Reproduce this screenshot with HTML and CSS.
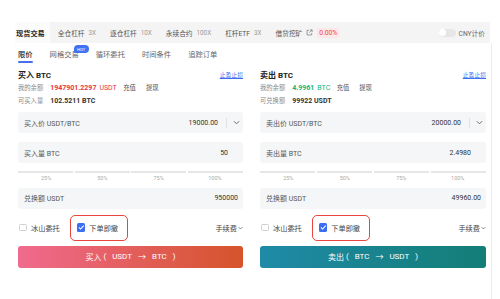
FILE: index.html
```html
<!DOCTYPE html>
<html lang="zh-CN">
<head>
<meta charset="utf-8">
<title>现货交易</title>
<link rel="stylesheet" href="styles.css">
</head>
<body>
<div class="app">
  <div class="topbar">
    <div class="tab active">现货交易</div>
    <div class="tab">全仓杠杆<span class="mult">3X</span></div>
    <div class="tab">逐仓杠杆<span class="mult">10X</span></div>
    <div class="tab">永续合约<span class="mult">100X</span></div>
    <div class="tab">杠杆ETF<span class="mult">3X</span></div>
    <div class="tab">借贷挖矿<svg class="ext" viewBox="0 0 8 8"><path d="M3.5 1.5H1.2v5.3h5.3V4.5" fill="none" stroke="#777" stroke-width="0.8"/><path d="M4.5 1h2.5v2.5M7 1L3.8 4.2" fill="none" stroke="#777" stroke-width="0.8"/></svg><span class="rate">0.00%</span></div>
    <div class="cny"><span class="toggle"><i></i></span>CNY计价</div>
  </div>
  <div class="main">
    <div class="subtabs">
      <div class="subtab active">限价</div>
      <div class="subtab grid">网格交易<span class="hot">HOT</span></div>
      <div class="subtab">循环委托</div>
      <div class="subtab">时间条件</div>
      <div class="subtab">追踪订单</div>
    </div>
    <div class="cols">
      <div class="col">
        <div class="title-row"><span class="title">买入 BTC</span><span class="link">止盈止损</span></div>
        <div class="info">我的余额<span class="num red">1947901.2297</span><span class="unit red">USDT</span><span class="act">充值</span><span class="act act2">提现</span></div>
        <div class="info">可买入量<span class="num dark">102.5211 BTC</span></div>
        <div class="field f1">买入价 USDT/BTC<span class="val">19000.00</span><span class="div"></span><svg class="chev" viewBox="0 0 8 5"><path d="M1 1l3 3 3-3" fill="none" stroke="#666" stroke-width="1.1"/></svg></div>
        <div class="field f2">买入量 BTC<span class="val">50</span></div>
        <div class="slider"><i></i><i></i><i></i><i></i></div>
        <div class="pcts"><span>25%</span><span>50%</span><span>75%</span><span>100%</span></div>
        <div class="field f3">兑换额 USDT<span class="val">950000</span></div>
        <div class="opts">
          <div class="opt"><span class="box"></span>冰山委托</div>
          <div class="opt hl"><span class="box on"><svg viewBox="0 0 8 8"><path d="M1.8 4.1l1.6 1.6 2.9-3.2" fill="none" stroke="#fff" stroke-width="1"/></svg></span>下单即撤</div>
          <div class="fee">手续费<svg class="chev small" viewBox="0 0 8 5"><path d="M1 1l3 3 3-3" fill="none" stroke="#555" stroke-width="1.1"/></svg></div>
        </div>
        <div class="btn buy-btn"><span>买入</span><span class="po">(</span><span>USDT</span><span>→</span><span>BTC</span><span>)</span></div>
      </div>
      <div class="col sell">
        <div class="title-row"><span class="title">卖出 BTC</span><span class="link">止盈止损</span></div>
        <div class="info">我的余额<span class="num green">4.9961</span><span class="unit green">BTC</span><span class="act">充值</span><span class="act act2">提现</span></div>
        <div class="info">可兑换额<span class="num dark">99922 USDT</span></div>
        <div class="field f1">卖出价 USDT/BTC<span class="val">20000.00</span><span class="div"></span><svg class="chev" viewBox="0 0 8 5"><path d="M1 1l3 3 3-3" fill="none" stroke="#666" stroke-width="1.1"/></svg></div>
        <div class="field f2">卖出量 BTC<span class="val">2.4980</span></div>
        <div class="slider"><i></i><i></i><i></i><i></i></div>
        <div class="pcts"><span>25%</span><span>50%</span><span>75%</span><span>100%</span></div>
        <div class="field f3">兑换额 USDT<span class="val">49960.00</span></div>
        <div class="opts">
          <div class="opt"><span class="box"></span>冰山委托</div>
          <div class="opt hl"><span class="box on"><svg viewBox="0 0 8 8"><path d="M1.8 4.1l1.6 1.6 2.9-3.2" fill="none" stroke="#fff" stroke-width="1"/></svg></span>下单即撤</div>
          <div class="fee">手续费<svg class="chev small" viewBox="0 0 8 5"><path d="M1 1l3 3 3-3" fill="none" stroke="#555" stroke-width="1.1"/></svg></div>
        </div>
        <div class="btn sell-btn"><span>卖出</span><span class="po">(</span><span>BTC</span><span>→</span><span>USDT</span><span>)</span></div>
      </div>
    </div>
  </div>
</div>
</body>
</html>
```
FILE: styles.css
```css
* { box-sizing: border-box; }
body {
  margin: 0;
  background: #fff;
  font-family: "Roboto", "Noto Sans CJK SC", sans-serif;
  color: #333;
}
.app {
  margin: 22px 0 0 15px;
  width: 478px;
}
.topbar {
  width: 475px;
  height: 21px;
  background: #f4f4f4;
  display: flex;
  align-items: center;
  gap: 14px;
  font-size: 6.7px;
  color: #555;
  white-space: nowrap;
}
.tab {
  display: flex;
  align-items: center;
}
.tab.active {
  height: 100%;
  background: #fbfbfb;
  padding: 0 5px 0 1px;
  margin-right: -6px;
  font-weight: 700;
  font-size: 7.2px;
  color: #222;
}
.mult {
  font-size: 6.3px;
  color: #999;
  margin-left: 4px;
}
.ext {
  width: 7px;
  height: 7px;
  margin-left: 4px;
}
.rate {
  margin-left: 4px;
  background: #fde7e8;
  color: #f0434a;
  border-radius: 2px;
  padding: 1px 2px;
  font-size: 6.7px;
}
.cny {
  margin-left: auto;
  margin-right: 5px;
  display: flex;
  align-items: center;
  color: #666;
}
.toggle {
  width: 17px;
  height: 8px;
  border-radius: 4px;
  background: #e6e6e6;
  margin-right: 3px;
  position: relative;
}
.toggle i {
  position: absolute;
  left: 0.5px;
  top: 0.5px;
  width: 7px;
  height: 7px;
  border-radius: 50%;
  background: #fff;
}
.main {
  width: 477px;
  height: 256px;
  border-right: 1px solid #ececec;
}
.subtabs {
  height: 21px;
  display: flex;
  align-items: center;
  gap: 17px;
  padding-left: 3px;
  font-size: 7.3px;
  color: #666;
}
.subtab {
  position: relative;
  height: 100%;
  display: flex;
  align-items: center;
}
.subtab.active {
  color: #222;
  font-weight: 500;
}
.subtab.active::after {
  content: "";
  position: absolute;
  left: 0;
  right: 0;
  bottom: 1px;
  height: 2px;
  border-radius: 1px;
  background: #4a6cf0;
}
.hot {
  position: absolute;
  left: 24px;
  top: 2px;
  width: 15px;
  height: 8px;
  border-radius: 4px 4px 4px 1px;
  background: #3f73f3;
  color: #fff;
  font-size: 4.2px;
  display: flex;
  align-items: center;
  justify-content: center;
}
.cols {
  display: flex;
  gap: 17px;
  padding-left: 3px;
}
.col {
  width: 225px;
}
.col.sell {
  width: 226px;
}
.title-row {
  height: 13px;
  margin-top: 4px;
  display: flex;
  align-items: center;
  justify-content: space-between;
}
.title {
  font-size: 8px;
  font-weight: 700;
  color: #222;
}
.link {
  font-size: 5.8px;
  color: #3a6ff0;
  text-decoration: underline;
}
.info {
  height: 13px;
  display: flex;
  align-items: center;
  font-size: 6.3px;
  color: #888;
  white-space: nowrap;
}
.num {
  margin-left: 7px;
  font-weight: 700;
  font-size: 7px;
}
.red { color: #e8333f; }
.green { color: #12b57a; }
.dark { color: #333; }
.unit {
  margin-left: 3px;
  font-size: 7px;
}
.act {
  margin-left: 6.5px;
  color: #555;
}
.act2 {
  margin-left: 10px;
}
.field {
  height: 21px;
  background: #f5f6f7;
  border-radius: 3px;
  display: flex;
  align-items: center;
  padding: 0 5px 0 6px;
  font-size: 7px;
  color: #555;
  margin-top: 9px;
}
.f1 {
  margin-top: 5px;
  padding-right: 3px;
}
.f2 {
  padding-right: 15px;
}
.f3 {
  margin-top: 6px;
}
.val {
  margin-left: auto;
  color: #333;
}
.div {
  width: 1px;
  height: 10px;
  background: #e0e0e0;
  margin-left: 8px;
}
.chev {
  width: 7px;
  height: 5px;
  margin-left: 6px;
}
.chev.small {
  width: 5px;
  height: 4px;
  margin-left: 1px;
}
.slider {
  margin-top: 8px;
  height: 1.5px;
  display: flex;
  gap: 1.5px;
}
.slider i {
  flex: 1;
  background: #e6e6e6;
}
.pcts {
  display: flex;
  margin-top: 1px;
}
.pcts span {
  flex: 1;
  text-align: center;
  font-size: 5.5px;
  line-height: 8px;
  color: #aaa;
}
.opts {
  height: 26px;
  margin-top: 6px;
  display: flex;
  align-items: center;
}
.opt {
  display: flex;
  align-items: center;
  font-size: 7.2px;
  color: #444;
  height: 100%;
}
.box {
  width: 7.5px;
  height: 7.5px;
  border: 1px solid #cfcfcf;
  border-radius: 1.5px;
  margin: 0 4.5px 0 1px;
  background: #fff;
}
.box.on {
  border: none;
  background: #3b6ef3;
  width: 8.5px;
  height: 8.5px;
  margin: 0 4px 0 0;
  display: flex;
}
.box.on svg {
  width: 100%;
  height: 100%;
}
.hl {
  border: 1.5px solid #e8453c;
  border-radius: 5px;
  padding: 0 9px 0 6px;
  margin-left: 10px;
}
.fee {
  margin-left: auto;
  display: flex;
  align-items: center;
  font-size: 7.2px;
  color: #444;
}
.btn {
  margin-top: 5px;
  height: 22px;
  border-radius: 3px;
  display: flex;
  align-items: center;
  justify-content: center;
  gap: 6px;
  color: #fff;
  font-size: 8px;
}
.btn .po {
  margin-left: -4px;
}
.buy-btn {
  background: linear-gradient(90deg, #f06a8e, #d6532b);
}
.sell-btn {
  background: linear-gradient(90deg, #1f8aa6, #137e76);
}
```
